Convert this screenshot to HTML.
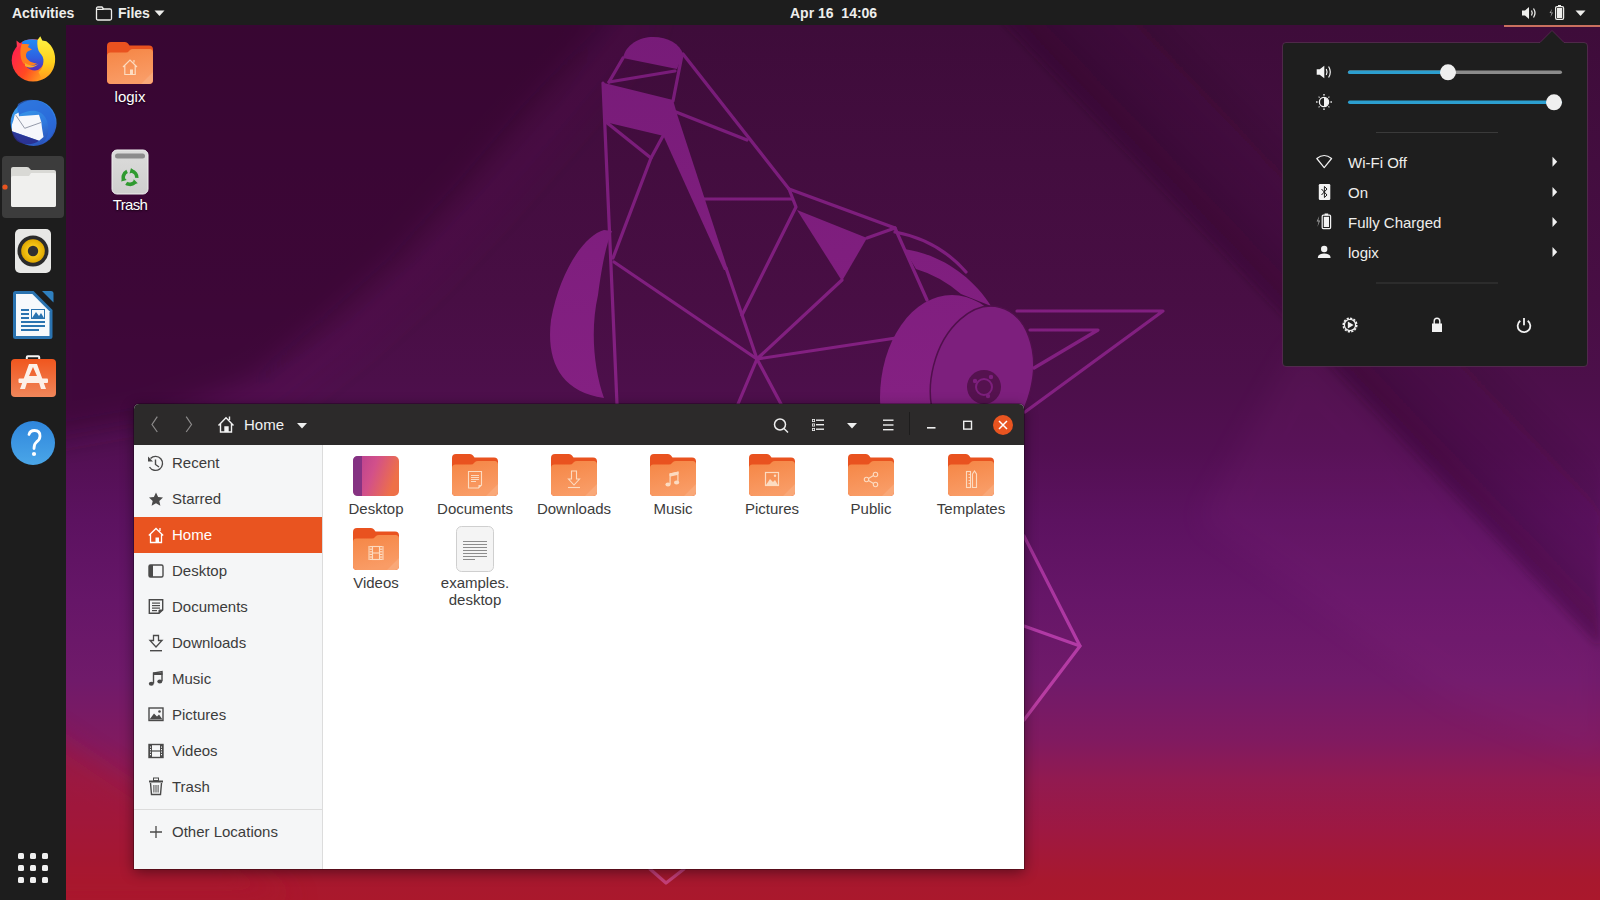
<!DOCTYPE html>
<html><head><meta charset="utf-8">
<style>
html,body{margin:0;padding:0;width:1600px;height:900px;overflow:hidden;}
body{position:relative;font-family:"Liberation Sans",sans-serif;background:#3d0c37;}
.a{position:absolute;}
#wall{position:absolute;left:0;top:0;}
#topbar{position:absolute;left:0;top:0;width:1600px;height:25px;background:#1d1d1d;color:#eeeeec;font-weight:bold;font-size:14px;}
#dock{position:absolute;left:0;top:25px;width:66px;height:875px;background:#1d1d1d;}
.dlabel{position:absolute;color:#fff;font-size:15px;text-align:center;width:100px;text-shadow:0 1px 2px rgba(0,0,0,.6);}
</style></head><body>
<!--WALL-->
<svg id="wall" width="1600" height="900" viewBox="0 0 1600 900">
<defs>
<linearGradient id="bg" gradientUnits="userSpaceOnUse" x1="0" y1="0" x2="0" y2="900">
<stop offset="0.03" stop-color="#3e0c3a"/>
<stop offset="0.333" stop-color="#480e44"/>
<stop offset="0.422" stop-color="#4c0f4a"/>
<stop offset="0.5" stop-color="#520f52"/>
<stop offset="0.578" stop-color="#5c1260"/>
<stop offset="0.667" stop-color="#661668"/>
<stop offset="0.756" stop-color="#701a6a"/>
<stop offset="0.822" stop-color="#801a60"/>
<stop offset="0.867" stop-color="#921a50"/>
<stop offset="0.922" stop-color="#9e1842"/>
<stop offset="0.978" stop-color="#a8182e"/>
<stop offset="1" stop-color="#aa182c"/>
</linearGradient>
<filter id="soft" x="-20%" y="-20%" width="140%" height="140%"><feGaussianBlur stdDeviation="14"/></filter><filter id="soft2" x="-5%" y="-5%" width="110%" height="110%"><feGaussianBlur stdDeviation="4"/></filter>
<linearGradient id="shaft" gradientUnits="userSpaceOnUse" x1="1300" y1="332" x2="1400" y2="237"><stop offset="0" stop-color="#2a0626" stop-opacity="0.34"/><stop offset="0.35" stop-color="#2a0626" stop-opacity="0.18"/><stop offset="1" stop-color="#2a0626" stop-opacity="0"/></linearGradient>
<linearGradient id="dg" gradientUnits="userSpaceOnUse" x1="0" y1="30" x2="0" y2="900"><stop offset="0" stop-color="#771b78"/><stop offset="0.42" stop-color="#842082"/><stop offset="0.7" stop-color="#b23aa6"/><stop offset="0.9" stop-color="#c4409a"/><stop offset="1" stop-color="#c84070"/></linearGradient>
</defs>
<rect width="1600" height="900" fill="url(#bg)"/>
<g filter="url(#soft)">
<path d="M40,0 L625,0 L600,33 L533,108 L467,185 L400,258 L333,318 L256,380 L150,420 L40,440 Z" fill="#33082d" opacity="0.5"/>
<path d="M650,10 L560,120 L490,200 L420,275 L350,338 L270,400 L160,440" fill="none" stroke="#6a1a62" stroke-width="40" opacity="0.09"/>
</g>
<path d="M983,0 L1600,0 L1600,647 Z" fill="url(#shaft)" filter="url(#soft2)"/>
<path d="M1300,340 L1600,647 L1600,760 L1450,700 L1200,520 Z" fill="#9a3090" opacity="0.1" filter="url(#soft)"/>
<path d="M0,700 L300,900 L0,900 Z" fill="#a8142e" opacity="0.45" filter="url(#soft)"/>
<g id="dingo">
<g fill="url(#dg)" stroke="none">
<path d="M623,58 C626,44 640,37 653,37 C668,37 680,44 683,54 L677,69 Z"/>
<path d="M604,83 L673,100 L677,114 L664,136 L605,122 Z"/>
<path d="M663,135 L676,111 L728,270 L724,270 Z"/>
<path d="M797,210 L867,238 L842,281 Z"/>
<path d="M604,230 C585,235 560,270 551,320 C546,360 560,392 604,398 C594,370 590,330 598,295 C602,265 606,245 612,231 Z"/>
<path d="M904,249 C940,254 972,276 991,306 L961,294 Q940,276 916,269 Z"/>
<ellipse cx="952" cy="398" rx="72" ry="103"/>
<ellipse cx="982" cy="378" rx="50" ry="73" transform="rotate(14 982 378)" fill="#7d1f7d" stroke="#50104c" stroke-width="1.5"/>
</g>
<g fill="none" stroke="url(#dg)" stroke-width="3.2" stroke-linejoin="round" stroke-linecap="round">
<path d="M623,58 L609,82"/>
<path d="M609,82 L675,71"/>
<path d="M682,55 L673,101"/>
<path d="M603,83 L617,404"/>
<path d="M683,54 L789,189 L895,228"/>
<path d="M676,112 L747,140"/>
<path d="M704,199 L792,199"/>
<path d="M789,189 L796,207 L742,315"/>
<path d="M606,122 L651,158 L613,258"/>
<path d="M664,134 L651,158"/>
<path d="M614,262 L757,359"/>
<path d="M726,268 L757,359"/>
<path d="M757,359 L896,338"/>
<path d="M757,359 L842,280"/>
<path d="M757,359 L738,404"/>
<path d="M757,359 L781,404"/>
<path d="M867,238 L895,228 L927,300"/>
<path d="M895,232 Q938,240 966,272"/>
<path d="M1017,311 L1163,311 L1025,412"/>
<path d="M1030,330 L1098,330 L1034,368"/>
<path d="M1024,536 L1080,646 L1024,720"/>
<path d="M1024,626 L1080,646"/>
<path d="M650,869 L666,883 L684,869"/>
</g>
<circle cx="984" cy="387" r="17" fill="#55124f"/>
<g fill="none" stroke="#7d1f7d" stroke-width="2"><circle cx="984" cy="387" r="8"/></g>
<g fill="#7d1f7d"><circle cx="975" cy="381" r="2.2"/><circle cx="991" cy="377" r="2.2"/><circle cx="988" cy="396" r="2.2"/></g>
</g>

</svg>
<!--/WALL-->

<div id="topbar">
<div class="a" style="left:12px;top:5px;line-height:16px;">Activities</div>
<svg class="a" style="left:95px;top:6px" width="18" height="15" viewBox="0 0 18 15"><path d="M1.5,2.5 Q1.5,1 3,1 L7,1 L8.6,3 L15,3 Q16.5,3 16.5,4.5 L16.5,12.5 Q16.5,14 15,14 L3,14 Q1.5,14 1.5,12.5 Z M1.5,3.3 L8.6,3.3" fill="none" stroke="#eeeeec" stroke-width="1.3"/></svg>
<div class="a" style="left:118px;top:5px;line-height:16px;">Files</div>
<svg class="a" style="left:154px;top:10px" width="11" height="7" viewBox="0 0 11 7"><path d="M0.5,0.5 L10.5,0.5 L5.5,6 Z" fill="#eeeeec"/></svg>
<div class="a" style="left:790px;top:5px;line-height:16px;">Apr 16&nbsp; 14:06</div>
<svg class="a" style="left:1521px;top:6px" width="16" height="14" viewBox="0 0 16 14"><path d="M1,4.5 L4,4.5 L8,1 L8,13 L4,9.5 L1,9.5 Z" fill="#eeeeec"/><path d="M10.5,4.5 Q12,7 10.5,9.5" fill="none" stroke="#eeeeec" stroke-width="1.3"/><path d="M12.5,2.5 Q15.5,7 12.5,11.5" fill="none" stroke="#eeeeec" stroke-width="1.3"/></svg>
<svg class="a" style="left:1548px;top:4px" width="17" height="17" viewBox="0 0 17 17"><path d="M4,5 L1.5,9 L3.5,9 L2.5,13 L5,8.5 L3,8.5 Z" fill="#aaaaaa"/><rect x="7.6" y="2.6" width="8" height="12.8" rx="1.3" fill="none" stroke="#eeeeec" stroke-width="1.2"/><rect x="10" y="1" width="3" height="2" fill="#eeeeec"/><rect x="9" y="4" width="5.2" height="10" fill="#eeeeec"/></svg>
<svg class="a" style="left:1575px;top:10px" width="11" height="7" viewBox="0 0 11 7"><path d="M0.5,0.5 L10.5,0.5 L5.5,6 Z" fill="#eeeeec"/></svg>
</div>
<div class="a" style="left:1504px;top:25px;width:96px;height:2px;background:#c9705f;"></div>
<div id="dock"></div>
<svg class="a" style="left:0;top:0" width="66" height="900" viewBox="0 0 66 900">
<defs>
<linearGradient id="ffo" x1="0" y1="0.3" x2="0.9" y2="0.8"><stop offset="0" stop-color="#ff1f4e"/><stop offset="0.5" stop-color="#ff4a22"/><stop offset="1" stop-color="#ffb31e"/></linearGradient><linearGradient id="fft" x1="0" y1="0" x2="0" y2="1"><stop offset="0" stop-color="#fff345"/><stop offset="0.6" stop-color="#ffd11c"/><stop offset="1" stop-color="#ff9a1e"/></linearGradient>
<linearGradient id="ffb" x1="0.5" y1="0" x2="0.5" y2="1"><stop offset="0" stop-color="#1f8cf5"/><stop offset="0.6" stop-color="#2f5fe0"/><stop offset="1" stop-color="#5a2bb8"/></linearGradient>
<linearGradient id="tbb" x1="0.2" y1="0" x2="0.8" y2="1"><stop offset="0" stop-color="#3aa0ec"/><stop offset="0.6" stop-color="#2f78de"/><stop offset="1" stop-color="#2a4ab0"/></linearGradient>
<linearGradient id="sw" x1="0" y1="0" x2="0" y2="1"><stop offset="0" stop-color="#f0561e"/><stop offset="1" stop-color="#f0865a"/></linearGradient>
<linearGradient id="hp" x1="0" y1="0" x2="0" y2="1"><stop offset="0" stop-color="#2f86dc"/><stop offset="1" stop-color="#4aa6e8"/></linearGradient>
<radialGradient id="rby" cx="0.5" cy="0.5" r="0.5"><stop offset="0.5" stop-color="#f3c417"/><stop offset="1" stop-color="#e0a800"/></radialGradient>
</defs>
<!-- firefox -->
<g transform="translate(8 33)">
<circle cx="25" cy="27.2" r="21.3" fill="url(#ffo)"/>
<path d="M14,9 C18,6 24,5.5 30,7 C29,13 31,18 34,21 C37,25 37,33 30,37 C22,39 16,33 16,27 Z" fill="url(#ffb)"/>
<path d="M29.5,7 L32.3,3.2 L34.3,7.6 L38.3,8.3 C45,13 48,21 47,29 C46,38 41,44 34,46.5 L30.5,39 C33,37.5 35,34 35.5,29 C36,25 34,22 32,20 C29.5,17 29,12 29.5,7 Z" fill="url(#fft)"/>
<path d="M8.5,7.5 L13.5,11.5 L9,16 Z" fill="#ff3550"/><path d="M13.5,11 L18.3,11 L21.5,11.5 L19.8,14 L24,16.5 L19.6,18.5 C18,20 17.5,22 18.3,24.5 C20,28 24,30 29,30.5 C26,33 20,33 16,31 C13,28 12,22 12.5,16 Z" fill="#ff7d1e"/>
<path d="M17,30 C21,33 27,33.5 31,30.5 C28,34 22,36 17,33 Z" fill="#ffab2a"/>
</g>
<!-- thunderbird -->
<g transform="translate(8 98)">
<circle cx="25.6" cy="25" r="23" fill="url(#tbb)"/>
<path d="M10,6 C16,1 26,0.5 34,4 C42,8 47,16 47,25 C47,34 42,42 34,46 C40,40 42,32 39,23 C37,17 33,14 28,13 C22,12 16,14 11,17 C9,13 9,9 10,6 Z" fill="#2a66d8" opacity="0.7"/>
<path d="M6.7,16.7 L10.6,14.4 L11,18.3 L31,16.7 L33.3,23.9 L34,30 L35.5,38.9 L31,42.8 L3.9,33.3 L3.9,26.7 L5.5,22 Z" fill="#f6f7fb"/>
<path d="M7.8,17.2 L16.7,30.3 L33.3,24.4" fill="none" stroke="#8a90a0" stroke-width="0.9"/>
<path d="M3.9,33.3 L31,42.8 C26,47 16,48 9,43 C6,40 4.5,37 3.9,33.3 Z" fill="#2a2a8a" opacity="0.85"/>
</g>
<!-- files highlight -->
<rect x="2" y="156" width="62" height="62" rx="4" fill="#3c3c3c"/>
<circle cx="5" cy="187" r="2.6" fill="#e95420"/>
<path d="M11,169 Q11,167 13,167 L27,167 Q29,167 30,169 L31,170 L54,170 Q56,170 56,172 L56,205 Q56,207 54,207 L13,207 Q11,207 11,205 Z" fill="#d9d9d5"/>
<path d="M11,178 Q11,176 13,176 L29,176 L31,173 L54,173 Q56,173 56,175 L56,205 Q56,207 54,207 L13,207 Q11,207 11,205 Z" fill="#f0f0ee"/>
<!-- rhythmbox -->
<rect x="15" y="229" width="36" height="44" rx="5" fill="#e8e8e6"/>
<circle cx="33" cy="251" r="15.5" fill="#2b2b2b"/>
<circle cx="33" cy="251" r="11.8" fill="url(#rby)"/>
<circle cx="33" cy="251" r="5.2" fill="#303030"/>
<!-- writer -->
<path d="M15.5,291 L33.5,291 L52.5,310 L52.5,336.5 Q52.5,339 50,339 L15.5,339 Q13,339 13,336.5 L13,293.5 Q13,291 15.5,291 Z" fill="#2a73b0"/>
<path d="M16,294 L32.3,294 L49.5,311.2 L49.5,336 L16,336 Z" fill="#f6f9fc"/>
<path d="M42,291 L51,291 Q53.5,291 53.5,293.5 L53.5,302.5 Z" fill="#2f80c0"/>
<g fill="#2a73b0"><rect x="21" y="309" width="8" height="2"/><rect x="21" y="313" width="8" height="2"/><rect x="21" y="317" width="8" height="2"/><rect x="21" y="321" width="24" height="2"/><rect x="21" y="325" width="24" height="2"/><rect x="21" y="329" width="18" height="2"/></g>
<rect x="31.5" y="309.5" width="13" height="9" fill="none" stroke="#2a73b0" stroke-width="1"/>
<path d="M32,318 L36,312 L39,316 L41,313 L44,318 Z" fill="#2a73b0"/>
<!-- software -->
<rect x="26.8" y="356.3" width="12.4" height="6" rx="1" fill="none" stroke="#f6f6f6" stroke-width="2"/>
<rect x="11" y="359" width="45" height="38" rx="4" fill="url(#sw)"/>
<path d="M29,364 L37,364 L46,389 L41,389 L38.5,381 L27.5,381 L25,389 L20,389 Z M29,376 L37,376 L33,367 Z" fill="#fdf0e8"/>
<rect x="18.5" y="378.5" width="29.5" height="4.5" rx="1" fill="#fdf0e8"/>
<!-- help -->
<circle cx="33" cy="443" r="22" fill="url(#hp)"/>
<path d="M29,434.5 Q30,430.5 34.5,430.5 Q40,430.5 40,436 Q40,439.5 36.5,442 Q34,444 34,448.5" fill="none" stroke="#fff" stroke-width="2.8" stroke-linecap="round"/>
<circle cx="34" cy="454" r="2.1" fill="#fff"/>
<!-- apps grid -->
<g fill="#f0f0f0">
<rect x="18" y="853" width="6" height="6" rx="1.5"/><rect x="30" y="853" width="6" height="6" rx="1.5"/><rect x="42" y="853" width="6" height="6" rx="1.5"/>
<rect x="18" y="865" width="6" height="6" rx="1.5"/><rect x="30" y="865" width="6" height="6" rx="1.5"/><rect x="42" y="865" width="6" height="6" rx="1.5"/>
<rect x="18" y="877" width="6" height="6" rx="1.5"/><rect x="30" y="877" width="6" height="6" rx="1.5"/><rect x="42" y="877" width="6" height="6" rx="1.5"/>
</g>
</svg>

<svg width="0" height="0" style="position:absolute">
<defs>
<linearGradient id="fold" x1="0" y1="0" x2="0.3" y2="1"><stop offset="0" stop-color="#f58544"/><stop offset="1" stop-color="#f99c66"/></linearGradient>
<linearGradient id="deskg" x1="0" y1="0" x2="1" y2="0.3"><stop offset="0" stop-color="#b43d92"/><stop offset="0.5" stop-color="#d2508a"/><stop offset="1" stop-color="#ee7048"/></linearGradient>
<symbol id="folder" viewBox="0 0 46 42">
<path d="M0,4 Q0,0 4,0 L18,0 Q20,0 21,1.5 L22.5,3.5 L42,3.5 Q46,3.5 46,7.5 L46,38 Q46,42 42,42 L4,42 Q0,42 0,38 Z" fill="#e9521f"/>
<path d="M0,14 Q0,10.5 3.5,10.5 L19,10.5 Q21,10.5 22,9 L23,8 Q24,7 26,7 L42.5,7 Q46,7 46,10.5 L46,38 Q46,42 42,42 L4,42 Q0,42 0,38 Z" fill="url(#fold)"/>
<path d="M46,30 L46,38 Q46,42 42,42 L34,42 Z" fill="#ffffff" opacity="0.12"/>
</symbol>
</defs>
</svg>
<!-- window shadow + frame -->
<div class="a" style="left:134px;top:404px;width:890px;height:465px;border-radius:5px 5px 0 0;box-shadow:0 3px 14px rgba(0,0,0,0.45), 0 0 0 1px rgba(0,0,0,0.25);overflow:hidden;background:#fff;">
<div class="a" style="left:0;top:0;width:890px;height:41px;background:#2c2a2a;"></div>
<div class="a" style="left:0;top:41px;width:188px;height:424px;background:#f5f6f7;border-right:1px solid #dcdcdc;"></div>
</div>
<!-- header -->
<svg class="a" style="left:134px;top:404px" width="890" height="41" viewBox="0 0 890 41">
<g fill="none" stroke="#8c8a8a" stroke-width="1.2"><path d="M23.3,12.7 L18,20.5 L23.3,28"/><path d="M52.2,12.7 L57.5,20.5 L52.2,28"/></g>
<path d="M84.5,21.5 L92,13.8 L99.5,21.5 M86.5,19.5 L86.5,28 L97.5,28 L97.5,19.5 M95.5,16 L95.5,12.5 M91,28 L91,23 L94,23 L94,28" fill="none" stroke="#f2f2f2" stroke-width="1.4"/>
<rect x="91" y="23" width="3" height="5" fill="#f2f2f2"/>
<path d="M163,19 L173,19 L168,24.5 Z" fill="#eeeeee"/>
<g fill="none" stroke="#eeeeee" stroke-width="1.5"><circle cx="646" cy="20.5" r="5.5"/><path d="M650,24.5 L654,28.5"/></g>
<g fill="#eeeeee"><rect x="678" y="15" width="3" height="3"/><rect x="678" y="19.5" width="3" height="3"/><rect x="678" y="24" width="3" height="3"/><rect x="682" y="15.5" width="8" height="1.4"/><rect x="682" y="20" width="8" height="1.4"/><rect x="682" y="24.5" width="8" height="1.4"/></g>
<g fill="#2c2a2a"><rect x="678.8" y="15.8" width="1.4" height="1.4"/><rect x="678.8" y="20.3" width="1.4" height="1.4"/><rect x="678.8" y="24.8" width="1.4" height="1.4"/></g>
<path d="M713,19 L723,19 L718,24.5 Z" fill="#eeeeee"/>
<g fill="#eeeeee"><rect x="749" y="15.5" width="10.5" height="1.4"/><rect x="749" y="20.3" width="10.5" height="1.4"/><rect x="749" y="25" width="10.5" height="1.4"/></g>
<rect x="775" y="8" width="1" height="23" fill="#1d1c1c"/>
<rect x="793" y="23" width="8.5" height="1.6" fill="#eeeeee"/>
<rect x="829.7" y="17.3" width="7.8" height="7.8" fill="none" stroke="#eeeeee" stroke-width="1.4"/>
<circle cx="869" cy="21" r="10" fill="#e95420"/>
<path d="M865,17 L873,25 M873,17 L865,25" stroke="#ffffff" stroke-width="1.5"/>
</svg>
<div class="a" style="left:244px;top:416px;font-size:15px;line-height:18px;color:#f2f2f2;">Home</div>

<!-- sidebar -->
<div class="a" style="left:134px;top:517px;width:188px;height:36px;background:#e95420;"></div>
<div class="a" style="left:134px;top:809px;width:188px;height:1px;background:#dcdcdc;"></div>
<div class="a" style="left:172px;top:445px;font-size:15px;color:#3c3c3c;line-height:36px;">Recent<br>Starred<br><span style="color:#fff">Home</span><br>Desktop<br>Documents<br>Downloads<br>Music<br>Pictures<br>Videos<br>Trash</div>
<div class="a" style="left:172px;top:814px;font-size:15px;color:#3c3c3c;line-height:36px;">Other Locations</div>
<svg class="a" style="left:134px;top:445px" width="188" height="424" viewBox="0 0 188 424">
<g transform="translate(0 1)"><!-- recent -->
<g fill="none" stroke="#4a4a4a" stroke-width="1.4"><path d="M16.5,12.5 A7,7 0 1 1 15.5,21"/><path d="M21.5,13.5 L21.5,18.5 L25,21"/></g>
<path d="M14,10.5 L14,15.5 L19,15.5 Z" fill="#4a4a4a"/>
</g>
<g transform="translate(0 0.5)"><!-- star -->
<path d="M22,47 L24.1,51.6 L29,52.1 L25.3,55.4 L26.4,60.2 L22,57.7 L17.6,60.2 L18.7,55.4 L15,52.1 L19.9,51.6 Z" fill="#4a4a4a"/>
</g>
<g transform="translate(0 1)"><!-- home -->
<path d="M14.8,89.5 L22,82.5 L29.2,89.5 M16.5,87.8 L16.5,96.5 L27.5,96.5 L27.5,87.8 M26,85 L26,82" fill="none" stroke="#ffffff" stroke-width="1.3"/>
<rect x="21.5" y="91.5" width="3.5" height="5" fill="#ffffff"/>
</g>
<g transform="translate(0 1)"><!-- desktop -->
<rect x="15" y="119" width="14" height="12" rx="1.5" fill="none" stroke="#4a4a4a" stroke-width="1.4"/>
<rect x="15" y="119" width="4" height="12" fill="#4a4a4a"/>
</g>
<g transform="translate(0 1)"><!-- documents -->
<path d="M15.3,153.7 L28.7,153.7 L28.7,164 L25,167.3 L15.3,167.3 Z" fill="none" stroke="#4a4a4a" stroke-width="1.4"/>
<path d="M25,167.3 L25,164 L28.7,164" fill="#4a4a4a" stroke="#4a4a4a" stroke-width="1"/>
<g fill="#4a4a4a"><rect x="18" y="156.5" width="8" height="1.2"/><rect x="18" y="159" width="8" height="1.2"/><rect x="18" y="161.5" width="8" height="1.2"/><rect x="18" y="164" width="5" height="1.2"/></g>
</g>
<g transform="translate(0 1)"><!-- downloads -->
<path d="M19.5,189.5 L24.5,189.5 L24.5,194.5 L28,194.5 L22,201 L16,194.5 L19.5,194.5 Z" fill="none" stroke="#4a4a4a" stroke-width="1.3"/>
<rect x="16" y="204" width="12" height="1.4" fill="#4a4a4a"/>
</g>
<g transform="translate(0 3.5)"><!-- music -->
<path d="M19.5,235 L19.5,224.5 L28,223 L28,232.5" fill="none" stroke="#4a4a4a" stroke-width="1.4"/>
<rect x="19" y="224" width="9.5" height="2.5" fill="#4a4a4a"/>
<ellipse cx="17.3" cy="235.2" rx="2.5" ry="2" fill="#4a4a4a"/><ellipse cx="25.8" cy="233" rx="2.5" ry="2" fill="#4a4a4a"/>
</g>
<g transform="translate(0 1)"><!-- pictures -->
<rect x="15" y="262" width="14" height="12.5" fill="none" stroke="#4a4a4a" stroke-width="1.4"/>
<path d="M15.5,273.5 L20,267.5 L23,270.5 L25,268.5 L28.5,273.5 Z" fill="#4a4a4a"/><circle cx="25.5" cy="265.5" r="1.3" fill="#4a4a4a"/>
</g>
<g transform="translate(0 2)"><!-- videos -->
<rect x="15" y="297.5" width="14" height="13" fill="none" stroke="#4a4a4a" stroke-width="1.4"/>
<g fill="#4a4a4a"><rect x="15" y="297.5" width="3" height="13"/><rect x="26" y="297.5" width="3" height="13"/><rect x="18" y="303.4" width="8" height="1.2"/></g>
<g fill="#f5f6f7"><rect x="16" y="299.5" width="1" height="1.2"/><rect x="16" y="302" width="1" height="1.2"/><rect x="16" y="304.5" width="1" height="1.2"/><rect x="16" y="307" width="1" height="1.2"/><rect x="27" y="299.5" width="1" height="1.2"/><rect x="27" y="302" width="1" height="1.2"/><rect x="27" y="304.5" width="1" height="1.2"/><rect x="27" y="307" width="1" height="1.2"/></g>
</g>
<g transform="translate(0 2.5)"><!-- trash -->
<path d="M16.5,335.5 L17.5,347 L26.5,347 L27.5,335.5" fill="none" stroke="#4a4a4a" stroke-width="1.4"/>
<rect x="15" y="333" width="14" height="2" fill="#4a4a4a"/><rect x="19.5" y="330.5" width="5" height="2.5" fill="none" stroke="#4a4a4a" stroke-width="1"/>
<g fill="#4a4a4a"><rect x="19.4" y="337.5" width="1" height="7.5"/><rect x="21.5" y="337.5" width="1" height="7.5"/><rect x="23.6" y="337.5" width="1" height="7.5"/></g>
</g>
<g transform="translate(0 0)"><!-- plus -->
<path d="M22,381 L22,393 M16,387 L28,387" stroke="#4a4a4a" stroke-width="1.3"/>
</g>
</svg>

<!-- content icons -->
<svg class="a" style="left:352px;top:454px" width="48" height="42" viewBox="0 0 48 42"><rect x="1" y="2" width="46" height="40" rx="5" fill="url(#deskg)"/><path d="M6,2 L10,2 L10,42 L6,42 Q1,42 1,37 L1,7 Q1,2 6,2 Z" fill="#7a2f80" opacity="0.85"/></svg>
<svg class="a" style="left:452px;top:454px" width="46" height="42" viewBox="0 0 46 42"><use href="#folder"/><g fill="none" stroke="#fde3cc" stroke-width="1.1" opacity="0.9"><path d="M16.5,17.5 L29.5,17.5 L29.5,31 L26.5,34 L16.5,34 Z"/></g><g fill="#fde3cc" opacity="0.9"><rect x="19" y="21" width="8" height="1"/><rect x="19" y="23" width="8" height="1"/><rect x="19" y="25" width="8" height="1"/><rect x="19" y="27" width="5" height="1"/><path d="M26.5,34 L26.5,31 L29.5,31 Z"/></g></svg>
<svg class="a" style="left:551px;top:454px" width="46" height="42" viewBox="0 0 46 42"><use href="#folder"/><g fill="none" stroke="#fde3cc" stroke-width="1.1" opacity="0.9"><path d="M20.5,17 L25.5,17 L25.5,25 L28.5,25 L23,31 L17.5,25 L20.5,25 Z"/><path d="M17,33.5 L29,33.5"/></g></svg>
<svg class="a" style="left:650px;top:454px" width="46" height="42" viewBox="0 0 46 42"><use href="#folder"/><g fill="#fde3cc" opacity="0.9"><path d="M19.5,30 L19.5,19.5 L28.5,17.5 L28.5,28 L27.3,28 L27.3,21 L20.7,22.5 L20.7,30 Z"/><ellipse cx="18" cy="30.5" rx="2.6" ry="2.1"/><ellipse cx="26.6" cy="28.5" rx="2.6" ry="2.1"/><path d="M19.5,19.5 L28.5,17.5 L28.5,20 L19.5,22 Z"/></g></svg>
<svg class="a" style="left:749px;top:454px" width="46" height="42" viewBox="0 0 46 42"><use href="#folder"/><g fill="none" stroke="#fde3cc" stroke-width="1.2" opacity="0.9"><rect x="16.5" y="18.5" width="13" height="13"/></g><g fill="#fde3cc" opacity="0.9"><path d="M17,31 L21,25 L24,28 L26,26 L29,31 Z"/><circle cx="26" cy="21.8" r="1.2"/></g></svg>
<svg class="a" style="left:848px;top:454px" width="46" height="42" viewBox="0 0 46 42"><use href="#folder"/><g fill="none" stroke="#fde3cc" stroke-width="1.1" opacity="0.9"><circle cx="18.5" cy="25.5" r="2.2"/><circle cx="27.5" cy="20.5" r="2.2"/><circle cx="27.5" cy="30.5" r="2.2"/><path d="M20.5,24.5 L25.5,21.5 M20.5,26.5 L25.5,29.5"/></g></svg>
<svg class="a" style="left:948px;top:454px" width="46" height="42" viewBox="0 0 46 42"><use href="#folder"/><g fill="none" stroke="#fde3cc" stroke-width="1.1" opacity="0.9"><rect x="18.5" y="17.5" width="4" height="16"/><path d="M24.5,20 L26.5,17 L28.5,20 L28.5,33.5 L24.5,33.5 Z"/></g><g fill="#fde3cc" opacity="0.9"><rect x="20.5" y="20" width="2" height="0.9"/><rect x="20.5" y="23" width="2" height="0.9"/><rect x="20.5" y="26" width="2" height="0.9"/><rect x="20.5" y="29" width="2" height="0.9"/></g></svg>
<svg class="a" style="left:353px;top:528px" width="46" height="42" viewBox="0 0 46 42"><use href="#folder"/><g fill="none" stroke="#fde3cc" stroke-width="1.1" opacity="0.9"><rect x="19.5" y="18.5" width="7" height="13"/><path d="M19.5,25 L26.5,25"/></g><g fill="#fde3cc" opacity="0.9"><rect x="15.5" y="18" width="1" height="14"/><rect x="29.5" y="18" width="1" height="14"/><rect x="16.5" y="18" width="2.5" height="1.2"/><rect x="16.5" y="20.6" width="2.5" height="1.2"/><rect x="16.5" y="23.2" width="2.5" height="1.2"/><rect x="16.5" y="25.8" width="2.5" height="1.2"/><rect x="16.5" y="28.4" width="2.5" height="1.2"/><rect x="16.5" y="30.8" width="2.5" height="1.2"/><rect x="27" y="18" width="2.5" height="1.2"/><rect x="27" y="20.6" width="2.5" height="1.2"/><rect x="27" y="23.2" width="2.5" height="1.2"/><rect x="27" y="25.8" width="2.5" height="1.2"/><rect x="27" y="28.4" width="2.5" height="1.2"/><rect x="27" y="30.8" width="2.5" height="1.2"/></g></svg>
<svg class="a" style="left:456px;top:526px" width="38" height="46" viewBox="0 0 38 46"><rect x="0.5" y="0.5" width="37" height="45" rx="5" fill="#f4f4f4" stroke="#cfcfcf" stroke-width="1"/><g fill="#8c8c8c"><rect x="7" y="15" width="24" height="1"/><rect x="7" y="18" width="24" height="1"/><rect x="7" y="21" width="24" height="1"/><rect x="7" y="24" width="24" height="1"/><rect x="7" y="27" width="24" height="1"/><rect x="7" y="30" width="24" height="1"/><rect x="7" y="33" width="12" height="1"/></g></svg>
<div class="a" style="left:326px;top:500px;width:100px;text-align:center;font-size:15px;line-height:18px;color:#3c3c3c;">Desktop</div>
<div class="a" style="left:425px;top:500px;width:100px;text-align:center;font-size:15px;line-height:18px;color:#3c3c3c;">Documents</div>
<div class="a" style="left:524px;top:500px;width:100px;text-align:center;font-size:15px;line-height:18px;color:#3c3c3c;">Downloads</div>
<div class="a" style="left:623px;top:500px;width:100px;text-align:center;font-size:15px;line-height:18px;color:#3c3c3c;">Music</div>
<div class="a" style="left:722px;top:500px;width:100px;text-align:center;font-size:15px;line-height:18px;color:#3c3c3c;">Pictures</div>
<div class="a" style="left:821px;top:500px;width:100px;text-align:center;font-size:15px;line-height:18px;color:#3c3c3c;">Public</div>
<div class="a" style="left:921px;top:500px;width:100px;text-align:center;font-size:15px;line-height:18px;color:#3c3c3c;">Templates</div>
<div class="a" style="left:326px;top:574px;width:100px;text-align:center;font-size:15px;line-height:18px;color:#3c3c3c;">Videos</div>
<div class="a" style="left:425px;top:574px;width:100px;text-align:center;font-size:15px;line-height:17px;color:#3c3c3c;">examples.<br>desktop</div>
<!-- system menu -->
<svg class="a" style="left:1270px;top:25px" width="330" height="355" viewBox="1270 25 330 355">
<defs><filter id="msh" x="-10%" y="-10%" width="120%" height="120%"><feGaussianBlur stdDeviation="3"/></filter></defs>
<path d="M1286,42.5 L1540,42.5 L1552,30.5 L1564,42.5 L1584,42.5 Q1587.5,42.5 1587.5,46 L1587.5,363 Q1587.5,366.5 1584,366.5 L1286,366.5 Q1282.5,366.5 1282.5,363 L1282.5,46 Q1282.5,42.5 1286,42.5 Z" fill="#1e1e1e" stroke="#6a3a62" stroke-opacity="0.55" stroke-width="1"/>
<!-- sliders -->
<rect x="1348" y="70.5" width="214" height="3.5" rx="1.75" fill="#8b8b8b"/>
<rect x="1348" y="70.5" width="100" height="3.5" rx="1.75" fill="#2c9fd0"/>
<circle cx="1448" cy="72.3" r="8" fill="#efefef"/>
<rect x="1348" y="100.5" width="214" height="3.5" rx="1.75" fill="#2c9fd0"/>
<circle cx="1554" cy="102.3" r="8" fill="#efefef"/>
<!-- volume icon -->
<path d="M1316.7,69.3 L1319.7,69.3 L1324.3,65.7 L1324.3,78.3 L1319.7,74.7 L1316.7,74.7 Z" fill="#f2f2f2"/>
<path d="M1326.3,69 Q1327.8,72 1326.3,75" fill="none" stroke="#f2f2f2" stroke-width="1.2"/>
<path d="M1328.6,66.5 Q1332,72 1328.6,77.5" fill="none" stroke="#f2f2f2" stroke-width="1.2"/>
<!-- brightness icon -->
<circle cx="1324" cy="102" r="4.6" fill="none" stroke="#f2f2f2" stroke-width="1.3"/>
<path d="M1324,97.4 A4.6,4.6 0 0 1 1324,106.6 Z" fill="#f2f2f2"/>
<g fill="#cfcfcf"><rect x="1323.2" y="94" width="1.6" height="1.6"/><rect x="1323.2" y="108.4" width="1.6" height="1.6"/><rect x="1316" y="101.2" width="1.6" height="1.6"/><rect x="1330.4" y="101.2" width="1.6" height="1.6"/></g>
<g stroke="#cfcfcf" stroke-width="1.2"><path d="M1318.6,96.6 L1319.6,97.6 M1329.4,96.6 L1328.4,97.6 M1318.6,107.4 L1319.6,106.4 M1329.4,107.4 L1328.4,106.4"/></g>
<!-- separators -->
<rect x="1376" y="132" width="122" height="1" fill="#3a3a3a"/>
<rect x="1376" y="282.5" width="122" height="1" fill="#3a3a3a"/>
<!-- wifi -->
<path d="M1316.8,158.5 Q1324.2,152.5 1331.6,158.5 L1324.2,167.6 Z" fill="none" stroke="#f2f2f2" stroke-width="1.2" stroke-linejoin="round"/>
<!-- bluetooth -->
<rect x="1318.8" y="184" width="11.5" height="16" rx="1.3" fill="#f2f2f2"/>
<path d="M1321.5,189 L1327,195 L1324.4,197.5 L1324.4,186.5 L1327,189 L1321.5,195" fill="none" stroke="#1e1e1e" stroke-width="1"/>
<!-- battery -->
<path d="M1319.2,216 L1316.6,221.5 L1318.6,221.5 L1317.4,227 L1320.2,220.5 L1318.3,220.5 Z" fill="#9a9a9a"/>
<rect x="1322.2" y="215.2" width="8.4" height="13.4" rx="1" fill="none" stroke="#f2f2f2" stroke-width="1.2"/>
<rect x="1324.6" y="213.5" width="3.6" height="1.8" fill="#f2f2f2"/>
<rect x="1323.8" y="216.8" width="5.2" height="10.2" fill="#f2f2f2"/>
<!-- user -->
<circle cx="1324.2" cy="249" r="3.2" fill="#f2f2f2"/>
<path d="M1317.8,258 Q1317.8,253.5 1324.2,253.5 Q1330.6,253.5 1330.6,258 Z" fill="#f2f2f2"/>
<!-- arrows -->
<g fill="#f2f2f2"><path d="M1552.5,156.8 L1557.2,161.8 L1552.5,166.8 Z"/><path d="M1552.5,187 L1557.2,192 L1552.5,197 Z"/><path d="M1552.5,217 L1557.2,222 L1552.5,227 Z"/><path d="M1552.5,247 L1557.2,252 L1552.5,257 Z"/></g>
<!-- settings -->
<g transform="translate(1350 325)">
<path d="M-1.5,-8.2 L1.5,-8.2 L2,-6.5 L4.2,-5.7 L5.8,-6.5 L7.9,-4.4 L6.9,-2.8 L7.6,-0.6 L8.2,-0.1 L8.2,2.9 L6.6,3.4 L5.8,5.5 L6.5,7.2 L4.4,9.3 L2.8,8.3 L0.6,9 L0,10 L-3,10 Z" fill="none"/>
<circle cx="0" cy="0" r="6.8" fill="none" stroke="#f2f2f2" stroke-width="1.5" stroke-dasharray="2.2 1.35"/>
<circle cx="0" cy="0" r="5.6" fill="none" stroke="#f2f2f2" stroke-width="1.3"/>
<path d="M-2.2,-3.5 L3.6,0 L-2.2,3.5 Z" fill="#f2f2f2"/>
</g>
<!-- lock -->
<path d="M1434.2,324 L1434.2,321.2 Q1434.2,318.2 1437,318.2 Q1439.8,318.2 1439.8,321.2 L1439.8,324" fill="none" stroke="#f2f2f2" stroke-width="1.4"/>
<rect x="1432" y="323.5" width="10" height="8.5" fill="#f2f2f2"/>
<!-- power -->
<path d="M1520.3,320.8 A6.3,6.3 0 1 0 1527.7,320.8" fill="none" stroke="#f2f2f2" stroke-width="1.8"/>
<rect x="1523.1" y="318" width="1.8" height="7.3" fill="#f2f2f2"/>
</svg>
<div class="a" style="left:1348px;top:148px;font-size:15px;line-height:30px;color:#eeeeec;">Wi-Fi Off<br>On<br>Fully Charged<br>logix</div>

<!-- desktop icons -->
<svg class="a" style="left:107px;top:42px" width="46" height="42" viewBox="0 0 46 42"><use href="#folder"/>
<g fill="none" stroke="#fde3cc" stroke-width="1.2" opacity="0.9"><path d="M16,25 L23,18 L30,25 M17.8,23.5 L17.8,32.5 L28.2,32.5 L28.2,23.5 M27,20.5 L27,18"/></g><rect x="23" y="27.5" width="3" height="5" fill="#fde3cc" opacity="0.9"/></svg>
<svg class="a" style="left:111px;top:149px" width="38" height="46" viewBox="0 0 38 46">
<defs><linearGradient id="trg" x1="0" y1="0" x2="0" y2="1"><stop offset="0" stop-color="#dcdcdb"/><stop offset="1" stop-color="#cfcfce"/></linearGradient></defs>
<rect x="1" y="1" width="36" height="44" rx="5" fill="url(#trg)" stroke="#f0f0f0" stroke-width="1"/>
<rect x="4" y="4.5" width="30" height="5" rx="2.5" fill="#8c8c8c"/>
<g transform="translate(19 28.5)">
<circle cx="0" cy="0" r="6.8" fill="none" stroke="#2f9a2f" stroke-width="3.6" stroke-dasharray="9.2 5.05" transform="rotate(-75)"/>
<path d="M-1.5,-9.5 L3.5,-6.8 L-1.5,-3.8 Z" fill="#2f9a2f" transform="rotate(15)"/>
<path d="M-1.5,-9.5 L3.5,-6.8 L-1.5,-3.8 Z" fill="#2f9a2f" transform="rotate(135)"/>
<path d="M-1.5,-9.5 L3.5,-6.8 L-1.5,-3.8 Z" fill="#2f9a2f" transform="rotate(255)"/>
</g>
</svg>
<div class="a" style="left:80px;top:88px;width:100px;text-align:center;font-size:15px;line-height:18px;color:#ffffff;text-shadow:0 1px 2px rgba(0,0,0,0.7);">logix</div>
<div class="a" style="left:80px;top:196px;width:100px;text-align:center;font-size:15px;line-height:18px;color:#ffffff;letter-spacing:-0.7px;text-shadow:0 1px 2px rgba(0,0,0,0.7);">Trash</div>

</body></html>
